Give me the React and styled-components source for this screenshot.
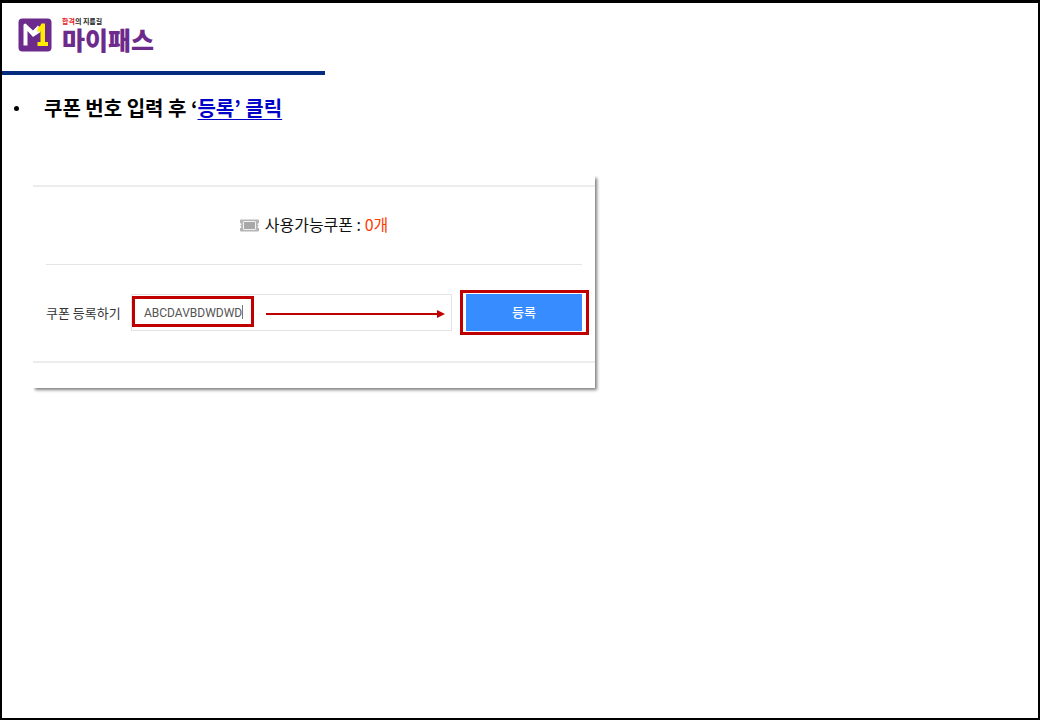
import React, { useState } from 'react';
import styled, { createGlobalStyle } from 'styled-components';

const GlobalStyle = createGlobalStyle`
  * {
    box-sizing: border-box;
  }

  body {
    margin: 0;
    font-family: 'Noto Sans CJK KR', 'Noto Sans', sans-serif;
    color: #000;
    background: #fff;
  }
`;

const Page = styled.div`
  min-height: 100vh;
  border: 2px solid #000;
  border-top-width: 3px;
`;

const Header = styled.header`
  padding: 13px 16px 0;
  height: 68px;
`;

const Brand = styled.div`
  display: flex;
  align-items: flex-start;
  gap: 10px;
`;

const Mark = styled.svg`
  width: 34px;
  height: 34px;
  margin-top: 2px;
`;

const BrandText = styled.div`
  display: flex;
  flex-direction: column;
`;

const Tagline = styled.span`
  font-size: 7px;
  font-weight: 700;
  line-height: 10px;
  color: #222;
`;

const Name = styled.span`
  font-size: 25px;
  font-weight: 900;
  line-height: 26px;
  color: #6c2a8c;
`;

const Accent = styled.em`
  font-style: normal;
  color: ${(props) => props.$color};
`;

const Rule = styled.hr`
  width: 323px;
  max-width: 100%;
  height: 4px;
  margin: 0;
  border: 0;
  background: #052b80;
`;

const Steps = styled.ul`
  margin: 0;
  padding: 18px 12px 0;
  list-style: none;
`;

const Step = styled.li`
  display: flex;
  align-items: center;
  font-size: 20px;
  font-weight: 700;
  line-height: 30px;

  &::before {
    content: '';
    width: 5px;
    height: 5px;
    margin-right: 25px;
    border-radius: 50%;
    background: #000;
  }
`;

const StepLink = styled.a`
  color: #0000c8;
  text-decoration: underline 1px #0000c8;
  text-underline-offset: 3px;
`;

const Card = styled.section`
  max-width: 562px;
  margin: 53px 31px 0;
  padding: 9px 0 25px;
  box-shadow: 2px 2px 3px rgba(0, 0, 0, 0.5);
  clip-path: inset(0 -10px -10px 0);
`;

const Panel = styled.div`
  padding: 0 13px;
  border-top: 2px solid #ececec;
  border-bottom: 2px solid #ececec;
`;

const Summary = styled.h2`
  display: flex;
  align-items: center;
  justify-content: center;
  gap: 6px;
  height: 78px;
  margin: 0;
  border-bottom: 1px solid #e4e4e4;
  font-size: 16px;
  font-weight: 400;
  line-height: 24px;
  color: #111;
`;

const SummaryText = styled.span`
  padding-bottom: 3px;
`;

const TicketIcon = styled.svg`
  width: 19px;
  height: 13px;
`;

const Form = styled.form`
  display: flex;
  align-items: center;
  height: 96px;
  padding-bottom: 1px;
`;

const Label = styled.label`
  flex: none;
  width: 85px;
  font-size: 13px;
  line-height: 20px;
  color: #333;
`;

const Field = styled.div`
  position: relative;
  flex: 1;
  min-width: 0;
  margin-right: 14px;
`;

const Input = styled.input`
  display: block;
  width: 100%;
  height: 37px;
  padding: 0 12px;
  border: 1px solid #e3e3e3;
  outline: none;
  background: #fff;
  font-family: Roboto, 'Noto Sans CJK KR', sans-serif;
  font-size: 12px;
  color: #555;
`;

const InputHighlight = styled.span`
  position: absolute;
  top: 2px;
  left: 1px;
  width: 122px;
  height: 31px;
  border: 3px solid #c00000;
  pointer-events: none;

  &::after {
    content: '';
    position: absolute;
    top: 6px;
    right: 8px;
    width: 1px;
    height: 14px;
    background: #777;
  }
`;

const Arrow = styled.svg`
  position: absolute;
  top: 16px;
  right: 7px;
  width: 179px;
  height: 8px;
  pointer-events: none;
`;

const ButtonWrap = styled.div`
  position: relative;
  flex: none;
`;

const Button = styled.button`
  display: block;
  width: 116px;
  height: 37px;
  padding: 0 0 2px;
  border: 0;
  background: #378cff;
  font-family: inherit;
  font-size: 13px;
  font-weight: 500;
  color: #fff;
`;

const ButtonHighlight = styled.span`
  position: absolute;
  top: -4px;
  right: -7px;
  bottom: -4px;
  left: -6px;
  border: 3px solid #c00000;
  pointer-events: none;
`;

const Logo = () => (
  <Mark viewBox="0 0 34 34" aria-hidden="true">
    <rect x="0.5" y="0.5" width="33" height="33" rx="4" fill="#6c2a8c" />
    <path
      d="M5.5 27.5V7Q5.5 5.5 7.5 5.5L15 12.5L20 7.5L22.5 10.5V14L15 19L9.5 13V27.5Z"
      fill="#fff"
    />
    <path
      d="M23.5 5.5H27V24H30V28H19.5V24H22.5V12.5L19.5 14.5V10Q22.5 8.5 23.5 5.5Z"
      fill="#ffec00"
    />
  </Mark>
);

const Ticket = () => (
  <TicketIcon viewBox="0 0 19 13" aria-hidden="true">
    <path
      d="M1 0.5H18Q19 0.5 19 1.5V4Q17.5 4.3 17.5 5.2T19 6.5Q17.5 7 17.5 8T19 9V11.5Q19 12.5 18 12.5H1Q0 12.5 0 11.5V9Q1.5 9 1.5 8T0 6.5Q1.5 6 1.5 5.2T0 4V1.5Q0 0.5 1 0.5Z"
      fill="#b5b5b5"
    />
    <rect x="3.5" y="2.5" width="12" height="8" rx="0.5" fill="#a8a8a8" stroke="#f2f2f2" />
  </TicketIcon>
);

const CouponForm = () => {
  const [code, setCode] = useState('ABCDAVBDWDWD');

  return (
    <Form onSubmit={(e) => e.preventDefault()}>
      <Label htmlFor="coupon">쿠폰 등록하기</Label>
      <Field>
        <Input
          id="coupon"
          type="text"
          value={code}
          onChange={(e) => setCode(e.target.value)}
        />
        <InputHighlight />
        <Arrow viewBox="0 0 179 8" aria-hidden="true">
          <path d="M0 4H172" stroke="#c00000" strokeWidth="2" />
          <path d="M171 0L179 4L171 8Z" fill="#c00000" />
        </Arrow>
      </Field>
      <ButtonWrap>
        <Button type="submit">등록</Button>
        <ButtonHighlight />
      </ButtonWrap>
    </Form>
  );
};

const App = () => {
  return (
    <Page>
      <GlobalStyle />
      <Header>
        <Brand>
          <Logo />
          <BrandText>
            <Tagline>
              <Accent $color="#e8232a">합격</Accent>의 지름길
            </Tagline>
            <Name>마이패스</Name>
          </BrandText>
        </Brand>
      </Header>
      <Rule />
      <main>
        <Steps>
          <Step>
            <span>
              쿠폰 번호 입력 후 ‘<StepLink href="#coupon">등록’ 클릭</StepLink>
            </span>
          </Step>
        </Steps>
        <Card>
          <Panel>
            <Summary>
              <Ticket />
              <SummaryText>
                사용가능쿠폰 : <Accent $color="#ff3c00">0개</Accent>
              </SummaryText>
            </Summary>
            <CouponForm />
          </Panel>
        </Card>
      </main>
    </Page>
  );
};

export default App;
